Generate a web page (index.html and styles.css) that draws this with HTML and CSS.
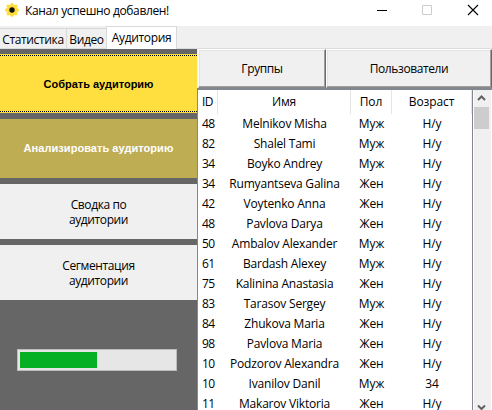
FILE: index.html
```html
<!DOCTYPE html>
<html lang="ru">
<head>
<meta charset="utf-8">
<title>Канал успешно добавлен!</title>
<link rel="stylesheet" href="styles.css">
</head>
<body>
<header class="titlebar">
  <svg class="logo" width="16" height="16" viewBox="0 0 16 16"><g fill="#ffdc3a"><circle cx="8" cy="8" r="5.2"/><circle cx="8" cy="2.7" r="1.7"/><circle cx="11.7" cy="4.2" r="1.8"/><circle cx="13.3" cy="8" r="1.7"/><circle cx="11.7" cy="11.8" r="1.8"/><circle cx="8" cy="13.3" r="1.7"/><circle cx="4.3" cy="11.8" r="1.8"/><circle cx="2.7" cy="8" r="1.7"/><circle cx="4.3" cy="4.2" r="1.8"/></g><circle cx="8" cy="8" r="2.7" fill="#111"/></svg>
  <span class="title">Канал успешно добавлен!</span>
  <svg class="controls" width="115" height="26" viewBox="0 0 115 26" fill="none"><path d="M0 10.5h10" stroke="#000"/><path d="M45.500 5.500h9v9h-9z" stroke="#ccc"/><path d="M91 5l10 10M101 5l-10 10" stroke="#000" stroke-width="1.1"/></svg>
</header>
<nav class="tabs"><span class="tab stat">Статистика</span><span class="tab video">Видео</span><span class="tab active">Аудитория</span></nav>
<main class="content">
  <aside class="sidebar">
    <button class="side primary"><span class="focus">Собрать аудиторию</span></button>
    <button class="side analyze">Анализировать аудиторию</button>
    <button class="side plain">Сводка по<br>аудитории</button>
    <button class="side plain">Сегментация<br>аудитории</button>
    <div class="progress"><div class="fill"></div></div>
  </aside>
  <section class="panel">
    <div class="switch"><button class="view groups">Группы</button><button class="view users">Пользователи</button></div>
    <div class="list">
      <div class="table">
        <div class="row head"><span>ID</span><span>Имя</span><span>Пол</span><span>Возраст</span></div>
        <div class="row"><span>48</span><span>Melnikov Misha</span><span>Муж</span><span>Н/у</span></div>
        <div class="row"><span>82</span><span>Shalel Tami</span><span>Муж</span><span>Н/у</span></div>
        <div class="row"><span>34</span><span>Boyko Andrey</span><span>Муж</span><span>Н/у</span></div>
        <div class="row"><span>34</span><span>Rumyantseva Galina</span><span>Жен</span><span>Н/у</span></div>
        <div class="row"><span>42</span><span>Voytenko Anna</span><span>Жен</span><span>Н/у</span></div>
        <div class="row"><span>48</span><span>Pavlova Darya</span><span>Жен</span><span>Н/у</span></div>
        <div class="row"><span>50</span><span>Ambalov Alexander</span><span>Муж</span><span>Н/у</span></div>
        <div class="row"><span>61</span><span>Bardash Alexey</span><span>Муж</span><span>Н/у</span></div>
        <div class="row"><span>75</span><span>Kalinina Anastasia</span><span>Жен</span><span>Н/у</span></div>
        <div class="row"><span>83</span><span>Tarasov Sergey</span><span>Муж</span><span>Н/у</span></div>
        <div class="row"><span>84</span><span>Zhukova Maria</span><span>Жен</span><span>Н/у</span></div>
        <div class="row"><span>98</span><span>Pavlova Maria</span><span>Жен</span><span>Н/у</span></div>
        <div class="row"><span>10</span><span>Podzorov Alexandra</span><span>Жен</span><span>Н/у</span></div>
        <div class="row"><span>10</span><span>Ivanilov Danil</span><span>Муж</span><span>34</span></div>
        <div class="row"><span>11</span><span>Makarov Viktoria</span><span>Жен</span><span>Н/у</span></div>
      </div>
      <div class="scrollbar">
        <svg width="15" height="17" viewBox="0 0 15 17"><path d="M4 10l3.500-3.500 3.500 3.500" fill="none" stroke="#606060" stroke-width="2"/></svg>
        <div class="thumb"></div>
        <svg class="down" width="15" height="7" viewBox="0 0 15 7"><path d="M4 2.500l3.500 3.500 3.500-3.500" fill="none" stroke="#606060" stroke-width="2"/></svg>
      </div>
    </div>
  </section>
</main>
</body>
</html>
```
FILE: styles.css
```css
* { box-sizing: border-box; }
body {
  margin: 0;
  width: 492px;
  height: 410px;
  overflow: hidden;
  display: flex;
  flex-direction: column;
  background: #f0f0f0;
  color: #000;
  font: 12px/16px "Open Sans", "Noto Sans", sans-serif;
  letter-spacing: -0.2px;
}
button {
  margin: 0;
  padding: 0;
  border: 0;
  border-radius: 0;
  font: inherit;
  letter-spacing: inherit;
  color: inherit;
  background: #f0f0f0;
}
.titlebar { display: flex; height: 26px; flex: none; background: #fff; padding-left: 4px; }
.logo { margin-top: 2px; }
.title { margin: 3px 0 0 5px; white-space: nowrap; letter-spacing: -0.35px; }
.controls { margin-left: auto; }
.tabs { display: flex; height: 23px; flex: none; align-items: flex-end; border-bottom: 1px solid #dcdcdc; letter-spacing: -0.35px; }
.tab {
  height: 20px;
  line-height: 22px;
  border: 1px solid #d9d9d9;
  border-width: 1px 1px 0 0;
  text-align: center;
  white-space: nowrap;
}
.stat { width: 67px; }
.video { width: 39px; border-right: 0; }
.active { width: 71px; height: 23px; margin-bottom: -1px; border-left-width: 1px; background: #fff; }
.content { display: flex; flex: 1; min-height: 0; }
.sidebar {
  display: flex;
  flex-direction: column;
  gap: 6px;
  width: 197px;
  padding-top: 5px;
  background: #666;
}
.side { height: 55px; line-height: 15px; flex: none; letter-spacing: -0.4px; }
.primary, .analyze { height: 59px; font: bold 11px/15px "Liberation Sans", Arial, sans-serif; letter-spacing: 0; }
.primary { padding: 1px 0; background: #ffdf40; }
.focus { display: block; height: 57px; line-height: 56px; border: 1px dotted #000; border-width: 1px 0; }
.analyze { background: #bfad54; color: #fff; letter-spacing: 0.05px; }
.progress { width: 160px; height: 22px; margin: 43px 0 0 17px; padding: 2px; border: 1px solid #bcbcbc; background: #e6e6e6; }
.fill { width: 77px; height: 16px; background: #06b025; }
.panel { display: flex; flex-direction: column; flex: 1; min-width: 0; }
.switch { display: flex; height: 39px; flex: none; padding-left: 1px; letter-spacing: -0.4px; }
.view { border: 1px solid; border-color: #fff #696969 #888 #fff; box-shadow: inset -1px -1px #a0a0a0, inset 1px 1px #e3e3e3; }
.groups { width: 128px; }
.users { width: 166px; }
.list { display: flex; flex: 1; min-height: 0; border: 1px solid #828790; border-width: 2px 0 0 1px; background: #fff; }
.table { width: 275px; flex: none; overflow: hidden; border-right: 1px solid #828790; }
.row { display: grid; grid-template-columns: 20px 133px 41px 80px; height: 20px; line-height: 20px; text-align: center; white-space: nowrap; }
.row span:first-child { text-align: left; padding-left: 4px; letter-spacing: -0.5px; }
.row span:nth-child(n+3) { letter-spacing: -0.1px; }
.head { height: 24px; line-height: 24px; }
.head span { border-right: 1px solid #e5e5e5; }
.scrollbar { display: flex; flex-direction: column; width: 17px; margin-left: 1px; background: #f0f0f0; }
.thumb { width: 15px; height: 22px; background: #cdcdcd; }
.down { margin-top: auto; }
```
